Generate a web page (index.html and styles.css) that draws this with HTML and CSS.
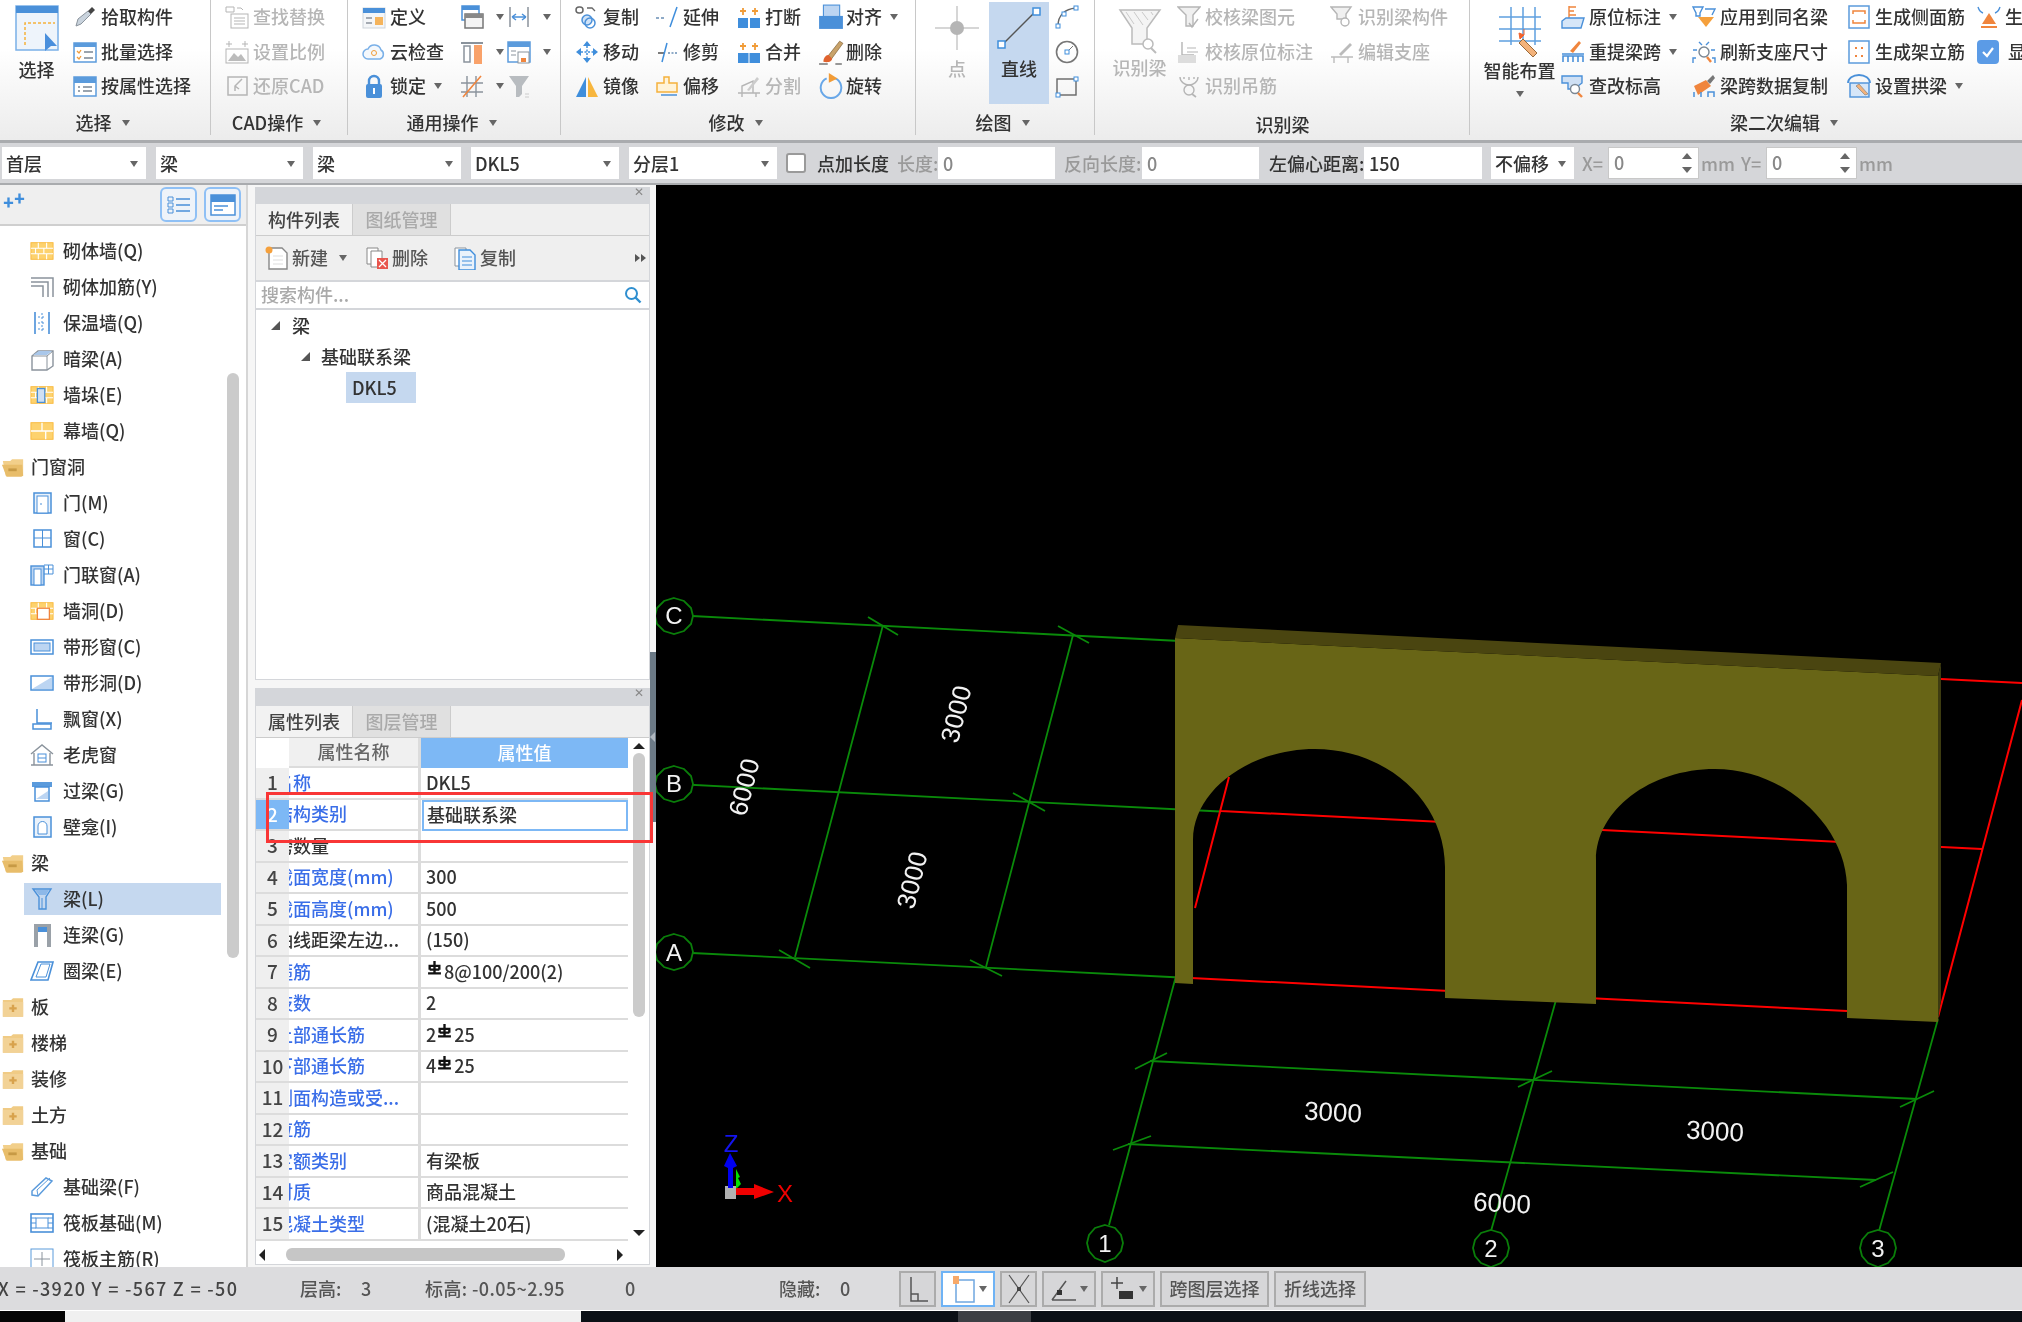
FILE: index.html
```html
<!DOCTYPE html>
<html lang="zh-CN">
<head>
<meta charset="utf-8">
<title>梁</title>
<link rel="stylesheet" href="styles.css">
</head>
<body>
<svg class="defs" width="0" height="0">
  <symbol id="fo" viewBox="0 0 26 22"><path d="M2 4h8l2-2h12v18H5z" fill="#f2cf8a"/><path d="M1 8h22l1 12-2 1H6z" fill="#e8bd6a"/><rect x="8" y="12" width="9" height="3" fill="#c79a45"/></symbol>
  <symbol id="fc" viewBox="0 0 26 22"><path d="M2 3h9l2-2h11v20H2z" fill="#f0cb85"/><path d="M2 5h22v16H2z" fill="#f2d296"/><path d="M9 12h8M13 8v8" stroke="#d8a24d" stroke-width="2.6"/></symbol>
  <symbol id="br" viewBox="0 0 26 20"><rect x="1" y="1" width="24" height="18" fill="#fdd26e" stroke="#f9b83a"/><path d="M1 7h24M1 13h24M9 1v6M18 1v6M6 7v6M15 7v6M9 13v6M18 13v6" stroke="#fff" stroke-width="1.2"/></symbol>
  <symbol id="hrb" viewBox="0 0 14 14"><path d="M1 12.500h12M7 1v11.500M2.500 9V5.500h9V9M2.500 9h9" fill="none" stroke="#111" stroke-width="2.200"/></symbol>
</svg>

<header class="ribbon">
  <section class="g g1">
    <div class="gb">
      <div class="big bw1">
        <svg class="bi" width="44" height="46" viewBox="0 0 44 46"><rect x="1" y="1" width="42" height="44" fill="#eef4fb" stroke="#7ab0e8" stroke-width="1.500"/><rect x="1" y="1" width="42" height="7" fill="#4a90d9"/><path d="M10 40V18h30" fill="none" stroke="#f5b13c" stroke-width="1.500" stroke-dasharray="3 2"/><path d="M30 28l12 13-6 0-6 5z" fill="#4a8fdc"/></svg>
        <span class="bl bl1">选择</span>
      </div>
      <div class="col">
        <div class="ri"><svg class="ic" viewBox="0 0 24 24"><path d="M3 21l2-7L15 6l3 3L8 19z" fill="#c9d3dd" stroke="#8a939c"/><path d="M15 6l4-4 3 3-4 4z" fill="#444"/></svg><span>拾取构件</span></div>
        <div class="ri"><svg class="ic" viewBox="0 0 24 24"><rect x="1" y="3" width="22" height="19" fill="#fff" stroke="#5b9bdc" stroke-width="1.500"/><rect x="1" y="3" width="22" height="4" fill="#5b9bdc"/><path d="M4 11l2 2 2-3M4 17l2 2 2-3" fill="none" stroke="#f19c38" stroke-width="1.300"/><path d="M11 12h9M11 18h9" stroke="#7a8794" stroke-width="1.500"/></svg><span>批量选择</span></div>
        <div class="ri"><svg class="ic" viewBox="0 0 24 24"><rect x="1" y="3" width="22" height="19" fill="#fff" stroke="#5b9bdc" stroke-width="1.500"/><rect x="1" y="3" width="22" height="6" fill="#5b9bdc"/><path d="M5 13h2M5 17h2M10 13h9M10 17h9" stroke="#7a8794" stroke-width="1.500"/></svg><span>按属性选择</span></div>
      </div>
    </div>
    <div class="gl">选择<i class="car"></i></div>
  </section>

  <section class="g g2 off">
    <div class="gb">
      <div class="col">
        <div class="ri"><svg class="ic" viewBox="0 0 24 24"><path d="M1 2h8v5H1zM12 3h4l2 2" fill="none" stroke="#b5b5b5"/><rect x="6" y="9" width="17" height="14" fill="#fff" stroke="#b5b5b5"/><path d="M9 13h11M9 16h11M9 19h11" stroke="#b5b5b5"/></svg><span>查找替换</span></div>
        <div class="ri"><svg class="ic" viewBox="0 0 24 24"><rect x="1" y="9" width="22" height="14" fill="none" stroke="#b5b5b5"/><path d="M3 21l6-8 4 4 3-3 5 7z" fill="#bbb"/><path d="M1 4h6M17 4h6M4 1v6M20 1v6" stroke="#b5b5b5"/></svg><span>设置比例</span></div>
        <div class="ri"><svg class="ic" viewBox="0 0 24 24"><rect x="3" y="3" width="19" height="18" fill="none" stroke="#b5b5b5" stroke-width="1.500"/><path d="M17 5l-7 7v5M10 12l4 3" fill="none" stroke="#b5b5b5" stroke-width="1.500"/></svg><span>还原CAD</span></div>
      </div>
    </div>
    <div class="gl on">CAD操作<i class="car"></i></div>
  </section>

  <section class="g g3">
    <div class="gb">
      <div class="col cw98">
        <div class="ri"><svg class="ic" viewBox="0 0 24 24"><rect x="1" y="3" width="22" height="20" fill="#f4f6f8" stroke="#cfd5db"/><rect x="1" y="3" width="22" height="5" fill="#4a90d9"/><rect x="13" y="12" width="8" height="8" fill="#f5b45c"/><path d="M4 13h6M4 18h6" stroke="#8a939c" stroke-width="1.500"/></svg><span>定义</span></div>
        <div class="ri"><svg class="ic" viewBox="0 0 24 24"><path d="M6 19a5 5 0 0 1 0-10 7 7 0 0 1 13 1 5 5 0 0 1-1 9z" fill="#f4f8fc" stroke="#7ab0e8" stroke-width="1.500"/><circle cx="12" cy="13" r="2.500" fill="none" stroke="#f19c38"/></svg><span>云检查</span></div>
        <div class="ri"><svg class="ic" viewBox="0 0 24 24"><path d="M7 11V7a5 5 0 0 1 10 0v4" fill="none" stroke="#4a90d9" stroke-width="2.400"/><rect x="4" y="10" width="16" height="14" rx="2" fill="#4a90d9"/><rect x="11" y="14" width="2" height="6" fill="#fff"/></svg><span>锁定</span><i class="car"></i></div>
      </div>
      <div class="col cw47">
        <div class="ri"><svg class="ic" viewBox="0 0 24 24"><rect x="2" y="1" width="17" height="14" fill="#fff" stroke="#4a90d9" stroke-width="1.500"/><rect x="2" y="1" width="17" height="4" fill="#4a90d9"/><rect x="5" y="9" width="18" height="14" fill="#f4f4f4" stroke="#777" stroke-width="1.500"/><rect x="5" y="9" width="18" height="4" fill="#888"/></svg><i class="car"></i></div>
        <div class="ri"><svg class="ic" viewBox="0 0 24 24"><path d="M1 3h22" stroke="#8a939c" stroke-width="2"/><rect x="4" y="6" width="6" height="16" fill="#fff" stroke="#8a939c" stroke-width="1.500"/><rect x="14" y="5" width="8" height="19" fill="#f9a26a"/></svg><i class="car"></i></div>
        <div class="ri"><svg class="ic" viewBox="0 0 24 24"><path d="M1 9h22M1 18h22M7 2v21M16 2v21" stroke="#8a939c" stroke-width="1.400"/><path d="M3 23L21 2" stroke="#f0853d" stroke-width="1.600"/></svg><i class="car"></i></div>
      </div>
      <div class="col">
        <div class="ri"><svg class="ic" viewBox="0 0 24 24"><path d="M3 2v20M21 2v20" stroke="#8a939c" stroke-width="1.500"/><path d="M5 12h14M5 12l4-3M5 12l4 3M19 12l-4-3M19 12l-4 3" fill="none" stroke="#4a90d9" stroke-width="1.500"/></svg><i class="car"></i></div>
        <div class="ri"><svg class="ic" viewBox="0 0 24 24"><rect x="1" y="2" width="22" height="20" fill="#fff" stroke="#5b9bdc" stroke-width="1.500"/><rect x="1" y="2" width="22" height="5" fill="#5b9bdc"/><path d="M4 11h5M4 15h5" stroke="#8a939c"/><rect x="11" y="12" width="11" height="11" fill="#fff" stroke="#8a939c"/><rect x="14" y="18" width="5" height="4" fill="#f0853d"/></svg><i class="car"></i></div>
        <div class="ri"><svg class="ic" viewBox="0 0 24 24"><path d="M2 2h20l-7 10v8l-3 3h-3V12z" fill="#b8bcc0"/><path d="M18 20h4M18 23h4" stroke="#ccc"/></svg></div>
      </div>
    </div>
    <div class="gl">通用操作<i class="car"></i></div>
  </section>

  <section class="g g4">
    <div class="gb">
      <div class="col cw80">
        <div class="ri"><svg class="ic" viewBox="0 0 24 24"><rect x="1" y="2" width="7" height="6" rx="3" fill="none" stroke="#666" stroke-width="1.500"/><path d="M12 3h5l3 3" fill="none" stroke="#666" stroke-width="1.300"/><circle cx="12" cy="15" r="5" fill="#cfe2f7" stroke="#4a90d9" stroke-width="1.500"/><circle cx="15" cy="18" r="5" fill="none" stroke="#4a90d9" stroke-width="1.500"/></svg><span>复制</span></div>
        <div class="ri"><svg class="ic" viewBox="0 0 24 24"><path d="M12 1l4 5h-8zM12 23l4-5h-8zM1 12l5-4v8zM23 12l-5-4v8z" fill="#3f8edc"/><path d="M6 12h12M12 6v12" stroke="#3f8edc" stroke-width="1.500" stroke-dasharray="2 1.500"/></svg><span>移动</span></div>
        <div class="ri"><svg class="ic" viewBox="0 0 24 24"><path d="M11 3L1 23h10z" fill="#3f8edc"/><path d="M13 3l10 20H13z" fill="#f7b63e"/></svg><span>镜像</span></div>
      </div>
      <div class="col cw82">
        <div class="ri"><svg class="ic" viewBox="0 0 24 24"><path d="M1 13h10" stroke="#6a8fb5" stroke-width="1.400" stroke-dasharray="3 2"/><path d="M15 22L22 2" stroke="#3f8edc" stroke-width="1.500"/></svg><span>延伸</span></div>
        <div class="ri"><svg class="ic" viewBox="0 0 24 24"><path d="M3 13h7" stroke="#444" stroke-width="1.400"/><path d="M13 13h9" stroke="#6a8fb5" stroke-dasharray="2 1.500" stroke-width="1.400"/><path d="M7 22L12 3" stroke="#3f8edc" stroke-width="1.500"/></svg><span>修剪</span></div>
        <div class="ri"><svg class="ic" viewBox="0 0 24 24"><path d="M9 3h5v6h8v9H2V9h7z" fill="#fff3d8" stroke="#f5b13c" stroke-width="1.500"/><path d="M6 21h16" stroke="#4a90d9" stroke-width="1.500"/></svg><span>偏移</span></div>
      </div>
      <div class="col cw81">
        <div class="ri"><svg class="ic" viewBox="0 0 24 24"><rect x="1" y="13" width="10" height="10" fill="#3f8edc"/><rect x="13" y="13" width="10" height="10" fill="#3f8edc"/><path d="M6 3v7M3 6h6M18 3v7M15 6h6" stroke="#f19c38" stroke-width="1.800"/></svg><span>打断</span></div>
        <div class="ri"><svg class="ic" viewBox="0 0 24 24"><rect x="1" y="13" width="22" height="10" fill="#3f8edc"/><path d="M12 13v10" stroke="#fff"/><path d="M6 3v7M3 6h6M18 3v7M15 6h6" stroke="#f19c38" stroke-width="1.800"/></svg><span>合并</span></div>
        <div class="ri off"><svg class="ic" viewBox="0 0 24 24"><path d="M1 19h22M5 23V12l11-5v12M19 23v-4" fill="none" stroke="#b5b5b5" stroke-width="1.400"/><path d="M10 16L20 3l2 2-10 12z" fill="#ccc"/></svg><span>分割</span></div>
      </div>
      <div class="col">
        <div class="ri"><svg class="ic ic28" viewBox="0 0 24 24"><rect x="5" y="1" width="15" height="12" fill="#bcd5f2" stroke="#4a90d9"/><rect x="1" y="11" width="22" height="12" fill="#4a90d9"/></svg><span>对齐</span><i class="car"></i></div>
        <div class="ri"><svg class="ic ic28" viewBox="0 0 24 24"><path d="M9 16L20 2l3 2-11 15z" fill="#c8a26a" stroke="#7a5a2a" stroke-width=".6"/><path d="M5 21c0-4 3-7 5-6l3 3c0 3-4 4-8 3z" fill="#e0622d"/><path d="M1 23h8M16 23h6" stroke="#333"/></svg><span>删除</span></div>
        <div class="ri"><svg class="ic ic28" viewBox="0 0 24 24"><path d="M8 5a9.500 9.500 0 1 0 8 0" fill="none" stroke="#68a7e8" stroke-width="1.800"/><path d="M10 0l8 5-8 4z" fill="#f19c38"/></svg><span>旋转</span></div>
      </div>
    </div>
    <div class="gl">修改<i class="car"></i></div>
  </section>

  <section class="g g5">
    <div class="gb">
      <div class="big bw64 off">
        <svg class="bi2" width="46" height="46" viewBox="0 0 46 46"><path d="M23 1v44M1 23h44" stroke="#c9c9c9" stroke-width="1.500"/><circle cx="23" cy="23" r="7" fill="#b5b5b5"/></svg>
        <span class="bl">点</span>
      </div>
      <div class="big bw60 sel">
        <svg class="bi3" width="46" height="46" viewBox="0 0 46 46"><path d="M6 40L40 6" stroke="#555" stroke-width="1.500"/><rect x="2" y="36" width="7" height="7" fill="#fff" stroke="#3f8edc" stroke-width="1.500"/><rect x="37" y="3" width="7" height="7" fill="#fff" stroke="#3f8edc" stroke-width="1.500"/></svg>
        <span class="bl">直线</span>
      </div>
      <div class="col sm">
        <div class="ri"><svg class="ic" viewBox="0 0 24 24"><path d="M3 21C3 10 10 4 21 3" fill="none" stroke="#666" stroke-width="1.400"/><rect x="1" y="19" width="4" height="4" fill="#fff" stroke="#3f8edc"/><rect x="19" y="1" width="4" height="4" fill="#fff" stroke="#3f8edc"/><rect x="7" y="7" width="4" height="4" fill="#fff" stroke="#3f8edc"/></svg></div>
        <div class="ri"><svg class="ic" viewBox="0 0 24 24"><circle cx="12" cy="12" r="10.500" fill="none" stroke="#777" stroke-width="1.600"/><path d="M12 12l6-6" stroke="#777"/><rect x="10" y="10" width="4" height="4" fill="#fff" stroke="#3f8edc"/></svg></div>
        <div class="ri"><svg class="ic" viewBox="0 0 24 24"><rect x="2" y="5" width="19" height="16" fill="none" stroke="#666" stroke-width="1.400"/><rect x="1" y="19" width="4" height="4" fill="#fff" stroke="#3f8edc"/><rect x="19" y="3" width="4" height="4" fill="#fff" stroke="#3f8edc"/></svg></div>
      </div>
    </div>
    <div class="gl">绘图<i class="car"></i></div>
  </section>

  <section class="g g6 off">
    <div class="gb">
      <div class="big bw70">
        <svg class="bi4" width="44" height="46" viewBox="0 0 44 46"><path d="M2 2h40L29 20v16H14V20z" fill="#f4f4f4" stroke="#bbb" stroke-width="1.500"/><path d="M8 4l8 12M16 4l9 13M24 4l6 8M33 4l2 3" stroke="#c9c9c9"/><circle cx="30" cy="36" r="5" fill="#fff" stroke="#bbb" stroke-width="1.500"/><path d="M33 40l5 5" stroke="#bbb" stroke-width="2"/></svg>
        <span class="bl">识别梁</span>
      </div>
      <div class="col cw153">
        <div class="ri"><svg class="ic" viewBox="0 0 24 24"><path d="M1 2h22l-7 8v11H9V10z" fill="#f0f0f0" stroke="#b5b5b5" stroke-width="1.400"/><path d="M12 18l3 4 6-8" fill="none" stroke="#b5b5b5" stroke-width="1.400"/></svg><span>校核梁图元</span></div>
        <div class="ri"><svg class="ic" viewBox="0 0 24 24"><path d="M5 2v13h12" fill="none" stroke="#b5b5b5" stroke-width="1.400"/><rect x="1" y="15" width="18" height="8" fill="#ddd"/><path d="M10 8h9M10 12h11" stroke="#b5b5b5"/></svg><span>校核原位标注</span></div>
        <div class="ri"><svg class="ic" viewBox="0 0 24 24"><path d="M3 3c0 5 5 8 9 8s9-3 9-8M7 3v2M12 3v3M17 3v2" fill="none" stroke="#b5b5b5" stroke-width="1.400"/><circle cx="12" cy="16" r="5" fill="none" stroke="#b5b5b5" stroke-width="1.400"/><path d="M15 20l4 3" stroke="#b5b5b5" stroke-width="1.600"/></svg><span>识别吊筋</span></div>
      </div>
      <div class="col">
        <div class="ri"><svg class="ic" viewBox="0 0 24 24"><path d="M1 2h20l-5 7v5H7V9z" fill="#f0f0f0" stroke="#b5b5b5" stroke-width="1.400"/><circle cx="15" cy="17" r="4" fill="#fff" stroke="#b5b5b5" stroke-width="1.400"/></svg><span>识别梁构件</span></div>
        <div class="ri"><svg class="ic" viewBox="0 0 24 24"><path d="M9 14L20 3l2 2-11 11z" fill="#bbb"/><path d="M1 17h22M4 23v-6M18 23v-6" stroke="#bbb" stroke-width="1.400"/></svg><span>编辑支座</span></div>
      </div>
    </div>
    <div class="gl on lowered">识别梁</div>
  </section>

  <section class="g g7">
    <div class="gb">
      <div class="big bw81">
        <svg class="bi5" width="46" height="56" viewBox="0 0 46 56"><path d="M2 12h42M2 24h42M2 36h42M14 2v38M26 2v38M38 2v38" stroke="#5fa0e0" stroke-width="1.500"/><path d="M26 34L40 48l-4 4-14-14z" fill="#f3b27a" stroke="#9a6a3a"/><path d="M22 28l5 2-4 4zM27 24v6" stroke="#f0622d" fill="#f0622d"/></svg>
        <span class="bl">智能布置</span>
        <i class="car bcar"></i>
      </div>
      <div class="col cw131">
        <div class="ri"><svg class="ic" viewBox="0 0 24 24"><path d="M8 1v12M8 2h7M8 6h5M8 10h7" stroke="#f0853d" fill="none" stroke-width="1.400"/><path d="M5 13h18l-3 10H1v-7z" fill="#d6e6f8" stroke="#4a90d9" stroke-width="1.400"/></svg><span>原位标注</span><i class="car"></i></div>
        <div class="ri"><svg class="ic" viewBox="0 0 24 24"><path d="M9 11l9-10 2 2-8 10z" fill="#f0853d"/><path d="M2 22v-6h20v6M7 22v-6M12 22v-6M17 22v-6M1 14h22" fill="none" stroke="#4a90d9" stroke-width="1.600"/></svg><span>重提梁跨</span><i class="car"></i></div>
        <div class="ri"><svg class="ic" viewBox="0 0 24 24"><path d="M1 2h20v7l-4 3v3H7V9H1z" fill="#cfe0f4" stroke="#4a90d9" stroke-width="1.400"/><circle cx="14" cy="15" r="4.500" fill="#fff" stroke="#7a8794" stroke-width="1.400"/><path d="M17 19l4 4" stroke="#f0853d" stroke-width="2.400"/></svg><span>查改标高</span></div>
      </div>
      <div class="col cw155">
        <div class="ri"><svg class="ic" viewBox="0 0 24 24"><path d="M1 2h10l-3 6v3H4V8zM13 4h10l-3 6" fill="none" stroke="#4a90d9" stroke-width="1.400"/><path d="M6 12h16l-8 10z" fill="#f5a03c"/></svg><span>应用到同名梁</span></div>
        <div class="ri"><svg class="ic" viewBox="0 0 24 24"><path d="M1 10h4M19 10h4M7 2l3 3M17 2l-3 3M1 23v-5h3M23 23v-5h-3" fill="none" stroke="#4a90d9" stroke-width="1.400"/><circle cx="12" cy="12" r="5" fill="#fff" stroke="#7a8794" stroke-width="1.400"/><path d="M15 17l4 5" stroke="#f0853d" stroke-width="2.400"/></svg><span>刷新支座尺寸</span></div>
        <div class="ri"><svg class="ic" viewBox="0 0 24 24"><path d="M2 12l12-6 5 6-13 9z" fill="#f0853d"/><path d="M15 7l6-6 2 3-5 6z" fill="#777"/><path d="M2 23v-5M9 23v-5M16 23v-5h6v5" fill="none" stroke="#4a90d9" stroke-width="1.500"/></svg><span>梁跨数据复制</span></div>
      </div>
      <div class="col cw130">
        <div class="ri"><svg class="ic" viewBox="0 0 24 24"><rect x="2" y="1" width="20" height="22" fill="#fff" stroke="#5b9bdc" stroke-width="1.500"/><path d="M6 9V6h12v3M6 15v3h12v-3" fill="none" stroke="#f0853d" stroke-width="1.500"/></svg><span>生成侧面筋</span></div>
        <div class="ri"><svg class="ic" viewBox="0 0 24 24"><rect x="2" y="1" width="20" height="22" fill="#fff" stroke="#5b9bdc" stroke-width="1.500"/><path d="M8 7h2v2H8zM14 7h2v2h-2zM8 15h2v2H8zM14 15h2v2h-2z" fill="#f0853d"/></svg><span>生成架立筋</span></div>
        <div class="ri"><svg class="ic" viewBox="0 0 24 24"><rect x="3" y="9" width="19" height="14" fill="#d6e6f8" stroke="#4a90d9" stroke-width="1.400"/><path d="M1 9a11 8 0 0 1 22 0" fill="none" stroke="#4a90d9" stroke-width="1.800"/><path d="M9 12l9 9 3-1-9-10z" fill="#f3b27a" stroke="#777" stroke-width=".6"/></svg><span>设置拱梁</span><i class="car"></i></div>
      </div>
      <div class="col">
        <div class="ri"><svg class="ic" viewBox="0 0 24 24"><path d="M1 2c1 3 2 5 5 6M23 2c-1 3-2 5-5 6" fill="none" stroke="#4a90d9" stroke-width="1.400"/><path d="M12 8l7 11H5z" fill="#f0853d"/><path d="M4 22h16" stroke="#f0853d" stroke-width="2"/></svg><span>生成吊筋</span></div>
        <div class="ri"><span class="chk"><svg width="14" height="12" viewBox="0 0 14 12"><path d="M2 6l4 4 6-8" fill="none" stroke="#fff" stroke-width="2.200"/></svg></span><span>显示吊筋</span></div>
      </div>
    </div>
    <div class="gl gl7">梁二次编辑<i class="car"></i></div>
  </section>
</header>

<div class="optbar">
  <div class="sel-box sw144"><span>首层</span><i class="car"></i></div>
  <div class="sel-box sw147"><span>梁</span><i class="car"></i></div>
  <div class="sel-box sw148"><span>梁</span><i class="car"></i></div>
  <div class="sel-box sw148"><span>DKL5</span><i class="car"></i></div>
  <div class="sel-box sw148"><span>分层1</span><i class="car"></i></div>
  <span class="cbx"></span>
  <span class="lbl lb1">点加长度</span>
  <span class="lbl dim lb2">长度:</span>
  <div class="inp iw117"><span class="dimv">0</span></div>
  <span class="lbl dim lb3">反向长度:</span>
  <div class="inp iw117"><span class="dimv">0</span></div>
  <span class="lbl lb4">左偏心距离:</span>
  <div class="inp iw118"><span>150</span></div>
  <div class="sel-box sw83 ml9"><span>不偏移</span><i class="car"></i></div>
  <span class="lbl dim lb5">X=</span>
  <div class="spin"><span class="dimv">0</span><b class="spa"></b></div>
  <span class="lbl dim lb6">mm</span>
  <span class="lbl dim lb7">Y=</span>
  <div class="spin"><span class="dimv">0</span><b class="spa"></b></div>
  <span class="lbl dim lb6">mm</span>
</div>

<main class="main">
  <aside class="nav">
    <div class="nav-head">
      <span class="spark">✚<small>✚</small></span>
      <div class="nav-btns">
        <span class="nbtn"><svg width="24" height="20" viewBox="0 0 24 20"><path d="M1 2h5v4H1zM1 8h5v4H1zM1 14h5v4H1z" fill="none" stroke="#4a90d9"/><path d="M9 4h14M9 10h14M9 16h14" stroke="#4a90d9" stroke-width="1.500"/></svg></span>
        <span class="nbtn"><svg width="26" height="22" viewBox="0 0 26 22"><rect x="1" y="1" width="24" height="20" fill="#fff" stroke="#4a90d9" stroke-width="1.500"/><rect x="1" y="1" width="24" height="7" fill="#4a90d9"/><path d="M4 12h14M4 16h9" stroke="#4a90d9" stroke-width="1.500"/></svg></span>
      </div>
    </div>
    <div class="nav-tree">
      <div class="nt"><svg class="ti" viewBox="0 0 26 20"><use href="#br"/></svg>砌体墙(Q)</div>
      <div class="nt"><svg class="ti" viewBox="0 0 24 24"><path d="M1 3h22v19M1 7h17v15M1 11h12v11" fill="none" stroke="#8a939c" stroke-width="1.500"/></svg>砌体加筋(Y)</div>
      <div class="nt"><svg class="ti" viewBox="0 0 24 24"><path d="M5 1v22M19 1v22" stroke="#4a90d9" stroke-width="1.600"/><path d="M8 6h8M8 12h8M8 18h8M12 2v20" stroke="#4a90d9" stroke-dasharray="2 2"/></svg>保温墙(Q)</div>
      <div class="nt"><svg class="ti" viewBox="0 0 24 24"><path d="M2 9l6-5h15v15l-6 4H2z" fill="#fff" stroke="#8a939c" stroke-width="1.400"/><path d="M2 9h15v14M17 9l6-5" fill="none" stroke="#8a939c"/><path d="M3 8l6-4h13l-5 4z" fill="#a9c7ea"/></svg>暗梁(A)</div>
      <div class="nt"><svg class="ti" viewBox="0 0 26 20"><use href="#br"/><rect x="8" y="3" width="8" height="15" fill="#cfe0f4" stroke="#4a90d9" stroke-width="1.400"/></svg>墙垛(E)</div>
      <div class="nt"><svg class="ti" viewBox="0 0 26 20"><rect x="1" y="1" width="24" height="18" fill="#fdd26e" stroke="#f9b83a"/><path d="M1 10h24M13 1v9M17 10v9" stroke="#fff" stroke-width="1.400"/></svg>幕墙(Q)</div>
      <div class="nt fold"><svg class="tf" viewBox="0 0 26 22"><use href="#fo"/></svg>门窗洞</div>
      <div class="nt"><svg class="ti" viewBox="0 0 24 24"><rect x="4" y="2" width="17" height="20" fill="#eaf2fb" stroke="#4a90d9" stroke-width="1.500"/><rect x="7" y="5" width="11" height="17" fill="#fff" stroke="#4a90d9"/><path d="M10 13h2" stroke="#4a90d9"/></svg>门(M)</div>
      <div class="nt"><svg class="ti" viewBox="0 0 24 24"><rect x="4" y="3" width="17" height="17" fill="#fff" stroke="#4a90d9" stroke-width="1.500"/><path d="M12.500 3v17M4 11h17" stroke="#4a90d9"/></svg>窗(C)</div>
      <div class="nt"><svg class="ti" viewBox="0 0 24 24"><rect x="1" y="3" width="13" height="19" fill="#bcd5f2" stroke="#4a90d9" stroke-width="1.400"/><rect x="4" y="6" width="7" height="16" fill="#fff" stroke="#4a90d9"/><path d="M14 2h9v9h-9M18.500 2v9M14 6h9" fill="none" stroke="#4a90d9"/></svg>门联窗(A)</div>
      <div class="nt"><svg class="ti" viewBox="0 0 26 20"><use href="#br"/><rect x="8" y="7" width="13" height="12" fill="#fff" stroke="#f0853d" stroke-width="1.400"/></svg>墙洞(D)</div>
      <div class="nt"><svg class="ti" viewBox="0 0 24 24"><rect x="1" y="5" width="22" height="14" fill="#fff" stroke="#4a90d9" stroke-width="1.500"/><rect x="4" y="8" width="16" height="8" fill="#bcd5f2" stroke="#4a90d9"/></svg>带形窗(C)</div>
      <div class="nt"><svg class="ti" viewBox="0 0 24 24"><rect x="1" y="5" width="22" height="14" fill="#fff" stroke="#4a90d9" stroke-width="1.500"/><path d="M2 18L22 6v12z" fill="#bcd5f2"/></svg>带形洞(D)</div>
      <div class="nt"><svg class="ti" viewBox="0 0 24 24"><path d="M7 2v14h15" fill="none" stroke="#4a90d9" stroke-width="1.500"/><rect x="3" y="17" width="18" height="5" fill="#fff" stroke="#4a90d9" stroke-width="1.500"/></svg>飘窗(X)</div>
      <div class="nt"><svg class="ti" viewBox="0 0 24 24"><path d="M1 11l11-9 11 9M4 10v12h16V10M1 22h22" fill="none" stroke="#8a939c" stroke-width="1.400"/><rect x="8" y="11" width="8" height="8" fill="#fff" stroke="#4a90d9"/><path d="M8 15h8" stroke="#4a90d9"/></svg>老虎窗</div>
      <div class="nt"><svg class="ti" viewBox="0 0 24 24"><rect x="2" y="3" width="20" height="5" fill="#5b9bdc"/><rect x="5" y="8" width="14" height="14" fill="#fff" stroke="#4a90d9" stroke-width="1.500"/><path d="M6 20l12-8v8z" fill="#bcd5f2"/></svg>过梁(G)</div>
      <div class="nt"><svg class="ti" viewBox="0 0 24 24"><rect x="4" y="2" width="17" height="20" fill="#eaf2fb" stroke="#4a90d9" stroke-width="1.500"/><path d="M8 19V11a4.500 4.500 0 0 1 9 0v8z" fill="#fff" stroke="#4a90d9"/></svg>壁龛(I)</div>
      <div class="nt fold"><svg class="tf" viewBox="0 0 26 22"><use href="#fo"/></svg>梁</div>
      <div class="nt cur"><svg class="ti" viewBox="0 0 24 24"><path d="M3 2h18l-5 8v12H9V10z" fill="none" stroke="#4a90d9" stroke-width="1.400"/><path d="M5 3h14l-3 5H9z" fill="#8db8e8"/><path d="M12 11v11" stroke="#4a90d9"/></svg>梁(L)</div>
      <div class="nt"><svg class="ti" viewBox="0 0 24 24"><path d="M4 1h17v23h-4V9H8v15H4z" fill="#9aa1a8"/><rect x="8" y="4" width="9" height="5" fill="#4a90d9"/></svg>连梁(G)</div>
      <div class="nt"><svg class="ti" viewBox="0 0 24 24"><path d="M8 3h15l-5 18H1z" fill="#fff" stroke="#4a90d9" stroke-width="1.600"/><path d="M11 5h9l-4 13H6z" fill="none" stroke="#4a90d9"/></svg>圈梁(E)</div>
      <div class="nt fold"><svg class="tf" viewBox="0 0 26 22"><use href="#fc"/></svg>板</div>
      <div class="nt fold"><svg class="tf" viewBox="0 0 26 22"><use href="#fc"/></svg>楼梯</div>
      <div class="nt fold"><svg class="tf" viewBox="0 0 26 22"><use href="#fc"/></svg>装修</div>
      <div class="nt fold"><svg class="tf" viewBox="0 0 26 22"><use href="#fc"/></svg>土方</div>
      <div class="nt fold"><svg class="tf" viewBox="0 0 26 22"><use href="#fo"/></svg>基础</div>
      <div class="nt"><svg class="ti" viewBox="0 0 24 24"><path d="M2 16L16 3l6 3L8 21l-6-1z" fill="#fff" stroke="#5b9bdc" stroke-width="1.500"/><path d="M8 21l-1-6L20 3" fill="none" stroke="#5b9bdc"/></svg>基础梁(F)</div>
      <div class="nt"><svg class="ti" viewBox="0 0 24 24"><rect x="1" y="3" width="22" height="18" fill="#fff" stroke="#4a90d9" stroke-width="1.600"/><rect x="6" y="7" width="12" height="10" fill="none" stroke="#4a90d9"/><path d="M1 7h5M1 12h5M1 17h5M18 7h5M18 12h5M18 17h5" stroke="#4a90d9"/></svg>筏板基础(M)</div>
      <div class="nt"><svg class="ti" viewBox="0 0 24 24"><rect x="1" y="2" width="22" height="20" fill="#fff" stroke="#5b9bdc"/><path d="M4 12h16M12 5v14" stroke="#8a939c"/></svg>筏板主筋(R)</div>
      <div class="nav-thumb"></div>
    </div>
  </aside>

  <section class="mid">
    <div class="panel p-top">
      <div class="ptitle"><span class="x">✕</span></div>
      <div class="tabs"><span class="tab act">构件列表</span><span class="tab">图纸管理</span></div>
      <div class="tbar">
        <span class="tb t1"><svg class="ic" viewBox="0 0 24 24"><path d="M4 2h13l5 5v16H4z" fill="#fff" stroke="#888" stroke-width="1.400"/><path d="M8 10h10M8 14h10M8 18h10" stroke="#ddd"/><circle cx="4" cy="4" r="3.500" fill="#f5a03c"/></svg>新建<i class="car"></i></span>
        <span class="tb t2"><svg class="ic" viewBox="0 0 24 24"><path d="M2 2h11v16H2z" fill="#fff" stroke="#888"/><path d="M6 5h11v16H6z" fill="#fff" stroke="#888"/><rect x="12" y="12" width="11" height="11" fill="#e8564e"/><path d="M14 14l7 7M21 14l-7 7" stroke="#fff" stroke-width="1.300"/></svg>删除</span>
        <span class="tb t3"><svg class="ic" viewBox="0 0 24 24"><path d="M2 2h11v18H2z" fill="#fff" stroke="#8a939c"/><path d="M6 4h11l5 5v15H6z" fill="#eaf2fb" stroke="#3f8edc" stroke-width="1.400"/><path d="M9 11h10M9 15h10M9 19h10" stroke="#3f8edc"/></svg>复制</span>
        <span class="more"><i class="mtri"></i><i class="mtri"></i></span>
      </div>
      <div class="search"><span>搜索构件...</span><svg width="18" height="18" viewBox="0 0 18 18"><circle cx="7.500" cy="7.500" r="5.500" fill="none" stroke="#2f8fd0" stroke-width="2"/><path d="M11.500 11.500l5 5" stroke="#2f8fd0" stroke-width="2.400"/></svg></div>
      <div class="ctree">
        <div class="cn l0"><i class="tri"></i>梁</div>
        <div class="cn l1"><i class="tri"></i>基础联系梁</div>
        <div class="cn l2"><span>DKL5</span></div>
      </div>
    </div>
    <div class="panel p-bot">
      <div class="ptitle"><span class="x">✕</span></div>
      <div class="tabs"><span class="tab act">属性列表</span><span class="tab">图层管理</span></div>
      <div class="gridwrap">
        <div class="grid">
          <div class="hd"><span class="n blank"></span><span class="k">属性名称</span><span class="v">属性值</span></div>
          <div class="tr"><span class="n">1</span><span class="k"><em>名称</em></span><span class="v">DKL5</span></div>
          <div class="tr on2"><span class="n">2</span><span class="k"><em>结构类别</em></span><span class="v"><b class="edit">基础联系梁</b></span></div>
          <div class="tr dk"><span class="n">3</span><span class="k"><em>跨数量</em></span><span class="v"></span></div>
          <div class="tr"><span class="n">4</span><span class="k"><em>截面宽度(mm)</em></span><span class="v">300</span></div>
          <div class="tr"><span class="n">5</span><span class="k"><em>截面高度(mm)</em></span><span class="v">500</span></div>
          <div class="tr dk"><span class="n">6</span><span class="k"><em>轴线距梁左边...</em></span><span class="v">(150)</span></div>
          <div class="tr"><span class="n">7</span><span class="k"><em>箍筋</em></span><span class="v"><svg class="rb" viewBox="0 0 14 14"><use href="#hrb"/></svg>8@100/200(2)</span></div>
          <div class="tr"><span class="n">8</span><span class="k"><em>肢数</em></span><span class="v">2</span></div>
          <div class="tr"><span class="n">9</span><span class="k"><em>上部通长筋</em></span><span class="v">2<svg class="rb" viewBox="0 0 14 14"><use href="#hrb"/></svg>25</span></div>
          <div class="tr"><span class="n">10</span><span class="k"><em>下部通长筋</em></span><span class="v">4<svg class="rb" viewBox="0 0 14 14"><use href="#hrb"/></svg>25</span></div>
          <div class="tr"><span class="n">11</span><span class="k"><em>侧面构造或受...</em></span><span class="v"></span></div>
          <div class="tr"><span class="n">12</span><span class="k"><em>拉筋</em></span><span class="v"></span></div>
          <div class="tr"><span class="n">13</span><span class="k"><em>定额类别</em></span><span class="v">有梁板</span></div>
          <div class="tr"><span class="n">14</span><span class="k"><em>材质</em></span><span class="v">商品混凝土</span></div>
          <div class="tr"><span class="n">15</span><span class="k"><em>混凝土类型</em></span><span class="v">(混凝土20石)</span></div>
        </div>
        <div class="vs"><i class="up"></i><b class="vth"></b><i class="dn"></i></div>
      </div>
      <div class="hs"><i class="lf"></i><b class="hth"></b><i class="rt"></i></div>
      <div class="redbox"></div>
    </div>
    <div class="handle"><i class="htri"></i></div>
  </section>

  <section class="canvas">
    <svg class="draw" viewBox="656 185 1366 1082" width="1366" height="1082">
      <g class="grn">
        <path d="M692 616L1180 641M656 783L1220 811.500M692 953L1180 977.500"/>
        <path d="M883 625L795 957M1073 635L986 967"/>
        <path d="M1150 1061L1917 1099M1128 1144L1876 1180"/>
        <path d="M1176 976L1109 1225M1556 1000L1491 1231M1938 1019L1879 1231"/>
        <path d="M868 617L898 635M1058 626L1089 643M1013 793L1045 811M779 950L810 968M970 960L1002 976"/>
        <path d="M1135 1069L1167 1053M1113 1150L1151 1136M1518 1087L1552 1071M1900 1107L1934 1091M1860 1187L1893 1172"/>
        <path class="hex" d="M674 598l10 3 7 7 2 8-2 8-7 7-10 3-10-3-7-7-2-8 2-8 7-7z"/>
        <path class="hex" d="M674 766l10 3 7 7 2 8-2 8-7 7-10 3-10-3-7-7-2-8 2-8 7-7z"/>
        <path class="hex" d="M674 934l10 3 7 7 2 8-2 8-7 7-10 3-10-3-7-7-2-8 2-8 7-7z"/>
        <path class="hex" d="M1105 1225l10 3 6 7 2 8-2 8-6 7-10 4-10-4-6-7-2-8 2-8 6-7z"/>
        <path class="hex" d="M1491 1230l10 3 6 7 2 8-2 8-6 7-10 4-10-4-6-7-2-8 2-8 6-7z"/>
        <path class="hex" d="M1878 1230l10 3 6 7 2 8-2 8-6 7-10 4-10-4-6-7-2-8 2-8 6-7z"/>
      </g>
      <g class="red">
        <path d="M1191 978L1847 1011M1221 811L1982 849M1941 679L2022 683M2022 700L1938 1017M1229 777L1195 908"/>
      </g>
      <path class="wall" d="M1175 638L1938 676V1022L1847 1018V885C1845 825 1785 769 1715 769C1650 769 1596 810 1596 860V1004L1445 998V867C1445 800 1385 749 1315 749C1250 749 1193 790 1193 840V984L1175 983Z"/>
      <path class="walltop" d="M1178 625L1941 663L1938 676L1175 638Z"/>
      <path class="walledge" d="M1938 676L1941 663V1000L1938 1022Z"/>
      <g class="lab">
        <text x="674" y="624">C</text><text x="674" y="792">B</text><text x="674" y="961">A</text>
        <text x="1105" y="1252">1</text><text x="1491" y="1257">2</text><text x="1878" y="1257">3</text>
        <text class="d" transform="translate(956 714) rotate(-76)" y="9">3000</text>
        <text class="d" transform="translate(912 880) rotate(-76)" y="9">3000</text>
        <text class="d" transform="translate(744 787) rotate(-76)" y="9">6000</text>
        <text class="d" transform="translate(1333 1112) rotate(3)" y="9">3000</text>
        <text class="d" transform="translate(1715 1131) rotate(3)" y="9">3000</text>
        <text class="d" transform="translate(1502 1203) rotate(3)" y="9">6000</text>
      </g>
      <g class="axis">
        <rect x="725" y="1186" width="11" height="13" fill="#b0b0b0"/>
        <path d="M736 1169l4 8-2 1 3 6-5 5z" fill="#00e000"/>
        <path d="M730 1153l7 13-4 2v20h-5v-20l-4-2z" fill="#0000f0"/>
        <path d="M736 1188h18v-4l20 8-20 7v-4h-18z" fill="#f00000"/>
        <text class="az" x="731" y="1152">Z</text>
        <text class="ax" x="785" y="1202">X</text>
      </g>
    </svg>
  </section>
</main>

<footer class="status">
  <span class="st s1">X = -3920 Y = -567 Z = -50</span>
  <span class="st s2">层高:</span><span class="st s3">3</span>
  <span class="st s4">标高: -0.05~2.95</span>
  <span class="st s5">0</span>
  <span class="st s6">隐藏:</span><span class="st s7">0</span>
  <span class="sb sb37"><svg width="22" height="28" viewBox="0 0 22 28"><path d="M4 2v24h17M4 19h7v7" fill="none" stroke="#555" stroke-width="1.500"/></svg></span>
  <span class="sb sb54 act"><svg width="26" height="32" viewBox="0 0 26 32"><rect x="7" y="7" width="18" height="22" fill="#fff" stroke="#6fa7e0" stroke-width="1.500"/><rect x="4" y="3" width="6" height="8" fill="#f7a969"/></svg><i class="car"></i></span>
  <span class="sb sb37"><svg width="26" height="32" viewBox="0 0 26 32"><path d="M3 2l20 28M23 2L3 30" stroke="#555" stroke-width="1.200"/><rect x="11" y="14" width="4" height="4" fill="#444"/></svg></span>
  <span class="sb sb54"><svg width="26" height="28" viewBox="0 0 26 28"><path d="M2 25h24M2 25L16 6" fill="none" stroke="#555" stroke-width="1.500"/><rect x="7" y="15" width="5" height="5" fill="#333"/></svg><i class="car"></i></span>
  <span class="sb sb54"><svg width="26" height="28" viewBox="0 0 26 28"><path d="M2 8h12M8 2v12" stroke="#444" stroke-width="1.500"/><rect x="10" y="16" width="14" height="8" fill="#333"/></svg><i class="car"></i></span>
  <span class="sb sbt">跨图层选择</span>
  <span class="sb sbu">折线选择</span>
</footer>

<div class="taskbar"><i class="tk1"></i><i class="tk2"></i><i class="tk3"></i><i class="tk4"></i><i class="tk5"></i></div>
</body>
</html>
```

FILE: styles.css
```css
* { box-sizing: border-box; }
html, body { margin: 0; padding: 0; }
body {
  width: 2022px; height: 1322px; overflow: hidden;
  display: flex; flex-direction: column;
  font: 500 18px/1.2 "Noto Sans CJK SC", "Noto Sans", sans-serif;
  color: #333; background: #fff;
  filter: blur(0.5px);
}
.defs { position: absolute; }
i, em, b { font-style: normal; font-weight: 500; }
.car { display: inline-block; width: 0; height: 0; border: 4.5px solid transparent; border-top: 6px solid #666; border-bottom: 0; flex: none; }

.ribbon { height: 140px; flex: none; display: flex; background: linear-gradient(#fff 35%, #ececec); overflow: hidden; }
.g { display: flex; flex-direction: column; flex: none; position: relative; }
.g::after { content: ""; position: absolute; right: 0; top: 0; height: 135px; width: 1px; background: #c8c8c8; }
.g1 { width: 211px; } .g2 { width: 137px; } .g3 { width: 213px; }
.g4 { width: 355px; } .g5 { width: 179px; } .g6 { width: 375px; } .g7 { width: 552px; }
.g7::after { display: none; }
.gb { height: 104px; display: flex; }
.g2 .gb, .g3 .gb, .g4 .gb { padding-left: 14px; }
.g5 .gb { padding-left: 9px; }
.g6 .gb { padding-left: 7px; }
.g7 .gb { padding-left: 8px; }
.gl { flex: 1; display: flex; align-items: center; justify-content: center; gap: 10px; padding: 1px 6px 0 0; white-space: nowrap; }
.gl7 { padding-right: 0; justify-content: flex-start; padding-left: 260px; }
.off { color: #b6b6b6; }
.on { color: #333; }
.lowered { padding-top: 6px; padding-right: 0; }
.col { display: flex; flex-direction: column; flex: none; }
.ri { height: 34.5px; display: flex; align-items: center; white-space: nowrap; }
.ri .car { margin-left: 8px; }
.ic { width: 24px; height: 24px; margin-right: 4px; flex: none; }
.ic28 { width: 26px; height: 26px; margin-right: 2px; }
.cw98 { width: 98px; } .cw47 { width: 47px; } .cw80 { width: 80px; } .cw82 { width: 82px; }
.cw81 { width: 81px; } .cw153 { width: 153px; } .cw131 { width: 131px; } .cw155 { width: 155px; } .cw130 { width: 130px; }
.big { display: flex; flex-direction: column; align-items: center; flex: none; height: 102px; margin-top: 2px; }
.bw1 { width: 73px; } .bw64 { width: 64px; } .bw60 { width: 60px; } .bw70 { width: 75px; } .bw81 { width: 83px; }
.bi { margin-top: 3px; }
.bi2, .bi3 { margin-top: 3px; }
.bi4 { margin-top: 6px; }
.bi5 { margin-top: 3px; }
.bl { white-space: nowrap; margin-top: 7px; }
.bl1 { margin-top: 8px; }
.bw70 .bl { margin-top: 3px; }
.bw81 .bl { margin-top: -1px; }
.bcar { margin-top: 9px; }
.sel { background: #c5d8ef; }
.sm { margin-left: 6px; }
.chk { width: 22px; height: 24px; margin-right: 9px; border-radius: 4px; background: #5b9be6; display: flex; align-items: center; justify-content: center; flex: none; }

.optbar { height: 45px; flex: none; display: flex; align-items: center; padding: 0 2px; background: #d5d6d9; border-top: 3px solid #a9abae; border-bottom: 2px solid #a9abae; }
.sel-box { height: 32px; background: #fff; display: flex; align-items: center; justify-content: space-between; padding: 1px 8px 0 4px; margin-right: 10px; flex: none; }
.sw144 { width: 144px; } .sw147 { width: 147px; } .sw148 { width: 148px; } .sw83 { width: 83px; margin-right: 0; }
.ml9 { margin-left: 9px; }
.cbx { width: 20px; height: 20px; border: 2px solid #9a9a9a; background: #fff; border-radius: 3px; margin-left: -1px; flex: none; }
.lbl { white-space: nowrap; flex: none; padding-top: 1px; }
.dim { color: #9a9a9a; }
.dimv { color: #888; }
.lb1 { margin-left: 11px; } .lb2 { margin-left: 8px; width: 41px; } .lb3 { margin-left: 9px; width: 78px; }
.lb4 { margin-left: 10px; width: 95px; } .lb5 { margin-left: 8px; width: 26px; } .lb6 { margin-left: 2px; width: 40px; } .lb7 { width: 25px; }
.inp { height: 32px; background: #fff; display: flex; align-items: center; padding: 1px 0 0 5px; flex: none; }
.iw117 { width: 117px; } .iw118 { width: 118px; }
.spin { width: 91px; height: 32px; background: #fff; border: 1px solid #c8c8c8; display: flex; align-items: center; justify-content: space-between; padding: 0 6px 0 5px; flex: none; }
.spa { width: 0; height: 20px; position: relative; border-left: 5px solid transparent; border-right: 5px solid transparent; background: none; }
.spa::before, .spa::after { content: ""; position: absolute; left: -5px; border-left: 5px solid transparent; border-right: 5px solid transparent; }
.spa::before { top: 0; border-bottom: 6px solid #666; }
.spa::after { bottom: 0; border-top: 6px solid #666; }

.main { height: 1082px; flex: none; display: flex; background: #f2f2f2; overflow: hidden; }
.nav { width: 248px; flex: none; background: #fff; border-right: 2px solid #d6d6d6; display: flex; flex-direction: column; overflow: hidden; }
.nav-head { height: 41px; flex: none; background: #efefef; border-bottom: 2px solid #cfcfcf; display: flex; align-items: center; justify-content: space-between; padding: 0 5px 0 3px; }
.spark { color: #3f8edc; font-size: 11px; position: relative; top: -2px; }
.spark small { font-size: 11px; position: relative; top: -4px; }
.nav-btns { display: flex; gap: 7px; }
.nbtn { width: 37px; height: 35px; border: 2px solid #8fc0f5; border-radius: 6px; display: flex; align-items: center; justify-content: center; background: #eef3f9; }
.nav-tree { flex: 1; position: relative; padding-top: 7px; overflow: hidden; }
.nt { height: 36px; display: flex; align-items: center; padding-left: 30px; white-space: nowrap; color: #333; }
.ti { width: 24px; height: 24px; margin-right: 9px; flex: none; }
.fold { padding-left: 1px; }
.tf { width: 24px; height: 21px; margin-right: 6px; flex: none; }
.cur { background: #c5d8ef; margin: 2px 26px 2px 24px; height: 32px; padding-left: 6px; width: 197px; }
.nav-thumb { position: absolute; right: 7px; top: 147px; width: 12px; height: 585px; background: #cbcbcb; border-radius: 6px; }

.mid { width: 408px; flex: none; padding: 2px 7px 2px 7px; position: relative; display: flex; flex-direction: column; gap: 8px; background: #f6f6f6; }
.panel { border: 1px solid #d4d6da; background: #fff; display: flex; flex-direction: column; position: relative; width: 395px; }
.p-top { height: 493px; flex: none; }
.p-bot { height: 577px; flex: none; }
.p-bot .ptitle { height: 17px; }
.ptitle { height: 16px; flex: none; background: #d4d6da; position: relative; }
.x { position: absolute; right: 5px; top: -3px; font-size: 12px; color: #888; font-family: "DejaVu Sans", sans-serif; font-weight: 700; }
.tabs { height: 32px; flex: none; display: flex; background: #efefef; border-bottom: 1px solid #ccc; }
.tab { width: 98px; display: flex; align-items: center; justify-content: center; color: #aaa; background: #e0e0e0; border-right: 1px solid #ccc; }
.tab.act { width: 97px; background: #f2f2f2; color: #444; }
.tbar { height: 46px; flex: none; background: #efefef; border-bottom: 2px solid #d4d6da; display: flex; align-items: center; position: relative; padding-left: 9px; color: #555; }
.tb { display: flex; align-items: center; white-space: nowrap; }
.tb .ic { margin-right: 3px; }
.tb .car { margin-left: 11px; color: #666; }
.t1 { width: 100px; } .t2 { width: 88px; }
.more { position: absolute; right: 3px; display: flex; gap: 1px; }
.mtri { width: 0; height: 0; border-top: 4px solid transparent; border-bottom: 4px solid transparent; border-left: 5px solid #555; }
.search { height: 28px; flex: none; display: flex; align-items: center; justify-content: space-between; padding: 0 7px 0 5px; color: #aaa; border-bottom: 2px solid #d4d6da; }
.ctree { flex: 1; }
.cn { display: flex; align-items: center; height: 31px; white-space: nowrap; color: #333; }
.tri { width: 0; height: 0; border-left: 9px solid transparent; border-bottom: 9px solid #555; margin-right: 12px; }
.l0 { padding-left: 15px; }
.l1 { padding-left: 45px; }
.l1 .tri { margin-right: 11px; }
.l2 { padding-left: 90px; }
.l2 span { width: 70px; height: 31px; background: #c5d8ef; padding-left: 6px; display: flex; align-items: center; }

.gridwrap { height: 505px; flex: none; display: flex; overflow: hidden; }
.grid { width: 372px; flex: none; overflow: hidden; }
.hd { height: 30px; display: flex; }
.hd .n { background: #fff; border: 0; }
.hd .k { background: #f0f0f0; justify-content: center; color: #666; padding: 0; overflow: visible; }
.hd .v { background: #7db8f5; color: #fff; justify-content: center; padding: 0; border: 0; }
.tr { height: 31.5px; display: flex; }
.n { width: 33px; flex: none; background: #efefef; color: #444; display: flex; align-items: center; justify-content: center; font-size: 19px; border-bottom: 2px solid #dcdcdc; }
.k { width: 132px; flex: none; overflow: hidden; display: flex; align-items: center; color: #3a6ee8; border-bottom: 2px solid #dcdcdc; border-right: 3px solid #dcdcdc; white-space: nowrap; }
.k em { margin-left: -14px; }
.v { flex: 1; display: flex; align-items: center; padding-left: 5px; color: #333; border-bottom: 2px solid #dcdcdc; white-space: nowrap; }
.rb { width: 15px; height: 15px; margin: -8px 2px 0 1px; }
.dk .k { color: #333; }
.on2 .n { background: #7db8f5; color: #fff; }
.on2 .v { padding: 0 0 0 1px; border: 0; }
.edit { flex: 1; height: 31px; border: 2px solid #7db8f5; display: flex; align-items: center; padding-left: 3px; background: #fff; }
.vs { flex: 1; position: relative; background: #fff; }
.vth { position: absolute; left: 5px; top: 15px; width: 12px; height: 264px; background: #cbcbcb; border-radius: 6px; }
.up, .dn { position: absolute; left: 5px; width: 0; height: 0; border-left: 6px solid transparent; border-right: 6px solid transparent; }
.up { top: 5px; border-bottom: 6px solid #222; }
.dn { bottom: 7px; border-top: 6px solid #222; }
.hs { flex: 1; position: relative; }
.hth { position: absolute; left: 30px; top: 5px; width: 279px; height: 13px; background: #c6c6c6; border-radius: 6px; }
.lf, .rt { position: absolute; top: 6px; width: 0; height: 0; border-top: 6px solid transparent; border-bottom: 6px solid transparent; }
.lf { left: 3px; border-right: 6px solid #222; }
.rt { right: 26px; border-left: 6px solid #222; }
.redbox { position: absolute; left: 10px; top: 103px; width: 387px; height: 51px; border: 3px solid #f93636; pointer-events: none; z-index: 3; }
.handle { position: absolute; right: 0; top: 467px; width: 6px; height: 170px; background: #6c7a86; display: flex; align-items: center; }
.htri { width: 0; height: 0; border-top: 5px solid transparent; border-bottom: 5px solid transparent; border-right: 5px solid #aeb6be; }

.canvas { flex: 1; background: #000; overflow: hidden; }
.draw { display: block; }
.grn path { stroke: #0a8a0a; stroke-width: 1.800; fill: none; }
.grn .hex { stroke: #0a7d0a; fill: #000; }
.red path { stroke: #f00; stroke-width: 2; fill: none; }
.wall { fill: #686516; }
.walltop { fill: #4a4510; }
.walledge { fill: #3d3c10; }
.lab text { fill: #f2f2f2; font: 24px "Liberation Sans", sans-serif; text-anchor: middle; }
.lab .d { font-size: 26px; }
.az, .ax { font: 24px "Liberation Sans", sans-serif; text-anchor: middle; }
.az { fill: #1414f0; }
.ax { fill: #f00000; }

.status { height: 43px; flex: none; background: #dcdcde; display: flex; align-items: center; position: relative; padding-top: 1px; }
.st { white-space: nowrap; color: #555; flex: none; }
.s1 { margin-left: -2px; width: 302px; color: #444; letter-spacing: 1.3px; }
.s2 { width: 61px; } .s3 { width: 64px; }
.s4 { width: 200px; letter-spacing: .4px; } .s5 { width: 154px; } .s6 { width: 61px; } .s7 { width: 59px; }
.sb { height: 36px; flex: none; border: 2px solid #ababab; background: #d6d6d8; display: flex; align-items: center; justify-content: center; gap: 4px; margin-right: 5px; color: #555; white-space: nowrap; }
.sb .car { border-top-color: #666; }
.sb37 { width: 37px; } .sb54 { width: 54px; }
.sb.act { background: #fff; border-color: #6fb3f5; }
.sbt { width: 109px; } .sbu { width: 92px; }

.taskbar { height: 12px; flex: none; display: flex; border-top: 1px solid #fff; background: #0b1016; }
.tk1 { width: 65px; background: #050505; }
.tk2 { width: 516px; background: #f0f0f0; }
.tk3 { width: 377px; background: #0b1016; }
.tk4 { width: 73px; background: #3c3f44; }
.tk5 { flex: 1; background: #0b1016; }
```
